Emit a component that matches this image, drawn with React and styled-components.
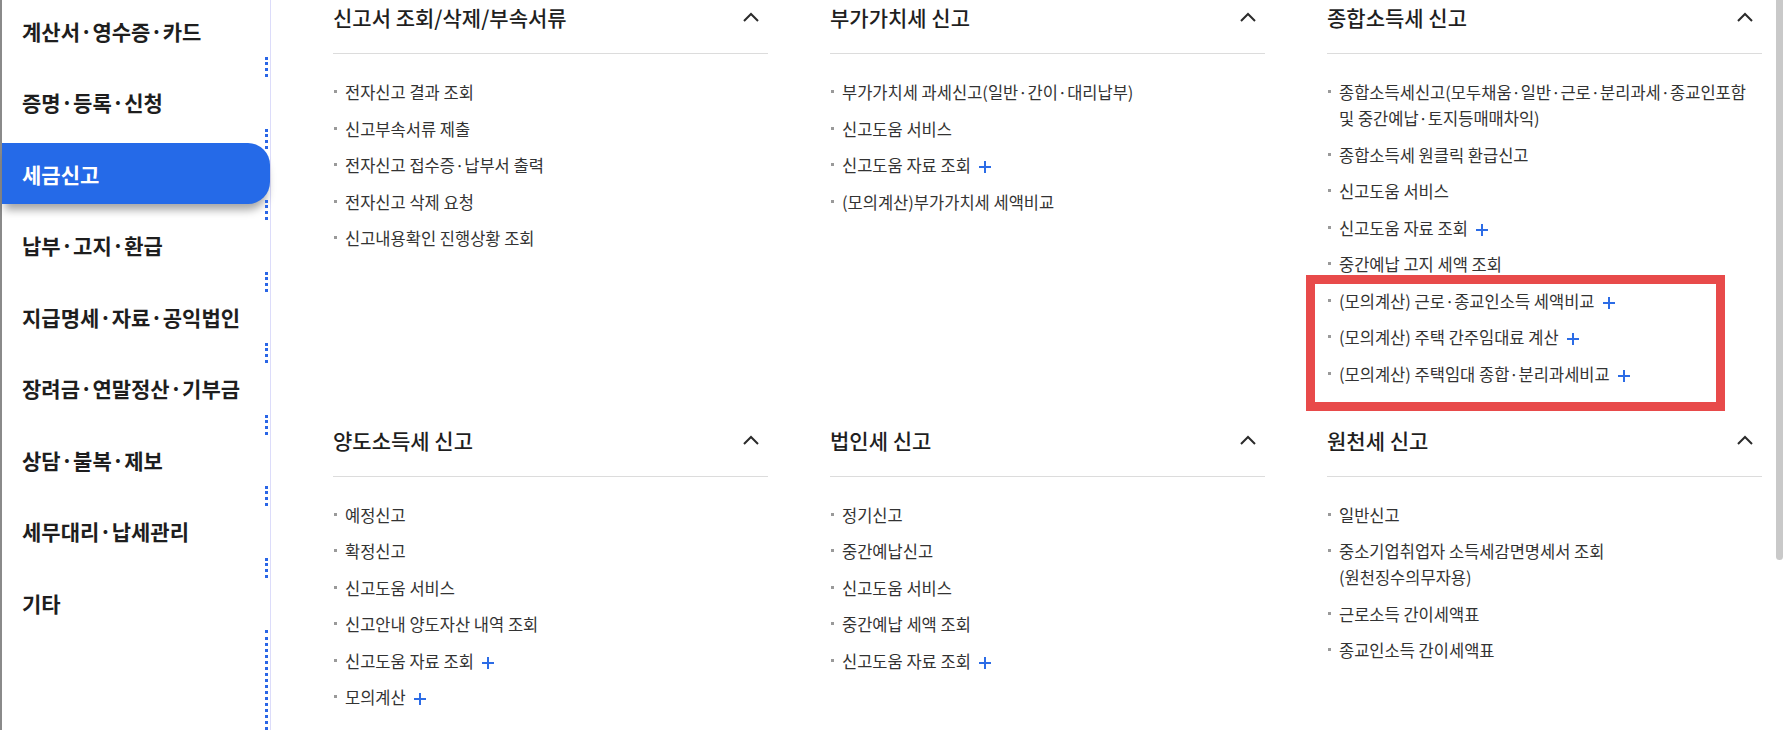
import React from 'react';
import styled, { createGlobalStyle } from 'styled-components';

const GlobalStyle = createGlobalStyle`
	html, body {
		margin: 0;
		padding: 0;
		background: #fff;
	}
	body {
		font-family: "Noto Sans CJK KR", "Noto Sans", sans-serif;
		overflow: hidden;
	}
	* {
		box-sizing: border-box;
	}
`;

const Layout = styled.div`
	position: relative;
	display: flex;
	width: 1783px;
	height: 730px;
	overflow: hidden;
`;

const Sidebar = styled.nav`
	flex-shrink: 0;
	width: 271px;
	border-left: 2px solid #8a8a8a;
	border-right: 1px solid #dcdcfa;
	display: flex;
	flex-direction: column;
	gap: 10.5px;
`;

const MenuItem = styled.a`
	position: relative;
	height: 61px;
	display: flex;
	align-items: center;
	padding-left: 20px;
	font-size: 21px;
	font-weight: 700;
	text-decoration: none;
	white-space: nowrap;
	color: ${p => (p.$active ? '#fff' : '#1e1e1e')};
	background: ${p => (p.$active ? '#256ae8' : 'transparent')};
	border-radius: 0 22px 22px 0;
	box-shadow: ${p => (p.$active ? '0 9px 8px -3px rgba(0,0,0,0.35)' : 'none')};

	&::after {
		content: '';
		position: absolute;
		right: 2px;
		bottom: -16px;
		height: 20px;
		border-right: 3px dotted #2a66e6;
		display: ${p => (p.$last ? 'none' : 'block')};
	}
`;

const SidebarTail = styled.div`
	flex: 1;
	margin-top: -14px;
	margin-right: 2px;
	border-right: 3px dotted #2a66e6;
`;

const Main = styled.main`
	flex: 1;
	padding-left: 62px;
	display: grid;
	grid-template-columns: repeat(3, 435px);
	column-gap: 62px;
	row-gap: 36px;
	align-content: start;
`;

const Section = styled.section`
	position: relative;
`;

const SectionHeader = styled.div`
	display: flex;
	justify-content: space-between;
	align-items: center;
	padding: 0 9px 19px 0;
	border-bottom: 1px solid #dcdcdc;
`;

const Title = styled.h3`
	margin: 0;
	font-size: 21px;
	font-weight: 500;
	line-height: 34px;
	color: #1f1f1f;
`;

const List = styled.ul`
	list-style: none;
	margin: 0;
	padding: 25px 0 0;
	display: flex;
	flex-direction: column;
	gap: 10.5px;
`;

const Item = styled.li`
	position: relative;
	padding-left: 12px;
	font-size: 16.5px;
	line-height: 26px;
	color: #333;
	word-break: keep-all;
	white-space: nowrap;

	&::before {
		content: '';
		position: absolute;
		left: 1px;
		top: 11px;
		width: 3px;
		height: 3px;
		background: #9a9a9a;
	}
`;

const PlusIcon = styled.svg`
	width: 12px;
	height: 12px;
	margin-left: 8px;
	vertical-align: -1px;
`;

const Highlight = styled.div`
	position: absolute;
	left: -21px;
	top: 275px;
	width: 419px;
	height: 136px;
	border: 9px solid #e84a4a;
	pointer-events: none;
`;

const ScrollThumb = styled.div`
	position: absolute;
	right: 0;
	top: 0;
	width: 7px;
	height: 560px;
	background: #c9c9c9;
	border-radius: 0 0 4px 4px;
`;

const Plus = () => (
	<PlusIcon viewBox="0 0 12 12">
		<path d="M6 0v12M0 6h12" stroke="#2c6ce6" strokeWidth="2" fill="none" />
	</PlusIcon>
);

const Chevron = () => (
	<svg width="16" height="10" viewBox="0 0 16 10">
		<polyline points="1,9 8,2 15,9" stroke="#2b2b2b" strokeWidth="2" fill="none" />
	</svg>
);

const menu = [
	'계산서·영수증·카드',
	'증명·등록·신청',
	'세금신고',
	'납부·고지·환급',
	'지급명세·자료·공익법인',
	'장려금·연말정산·기부금',
	'상담·불복·제보',
	'세무대리·납세관리',
	'기타',
];

// [text, hasPlus]
const sections = [
	{
		title: '신고서 조회/삭제/부속서류',
		items: [
			['전자신고 결과 조회'],
			['신고부속서류 제출'],
			['전자신고 접수증·납부서 출력'],
			['전자신고 삭제 요청'],
			['신고내용확인 진행상황 조회'],
		],
	},
	{
		title: '부가가치세 신고',
		items: [
			['부가가치세 과세신고(일반·간이·대리납부)'],
			['신고도움 서비스'],
			['신고도움 자료 조회', true],
			['(모의계산)부가가치세 세액비교'],
		],
	},
	{
		title: '종합소득세 신고',
		highlight: true,
		items: [
			[<>종합소득세신고(모두채움·일반·근로·분리과세·종교인포함<br />및 중간예납·토지등매매차익)</>],
			['종합소득세 원클릭 환급신고'],
			['신고도움 서비스'],
			['신고도움 자료 조회', true],
			['중간예납 고지 세액 조회'],
			['(모의계산) 근로·종교인소득 세액비교', true],
			['(모의계산) 주택 간주임대료 계산', true],
			['(모의계산) 주택임대 종합·분리과세비교', true],
		],
	},
	{
		title: '양도소득세 신고',
		items: [
			['예정신고'],
			['확정신고'],
			['신고도움 서비스'],
			['신고안내 양도자산 내역 조회'],
			['신고도움 자료 조회', true],
			['모의계산', true],
		],
	},
	{
		title: '법인세 신고',
		items: [
			['정기신고'],
			['중간예납신고'],
			['신고도움 서비스'],
			['중간예납 세액 조회'],
			['신고도움 자료 조회', true],
		],
	},
	{
		title: '원천세 신고',
		items: [
			['일반신고'],
			[<>중소기업취업자 소득세감면명세서 조회<br />(원천징수의무자용)</>],
			['근로소득 간이세액표'],
			['종교인소득 간이세액표'],
		],
	},
];

function App() {
	return (
		<>
			<GlobalStyle />
			<Layout>
				<Sidebar>
					{menu.map((m, i) => (
						<MenuItem key={m} $active={m === '세금신고'} $last={i === menu.length - 1}>
							{m}
						</MenuItem>
					))}
					<SidebarTail />
				</Sidebar>
				<Main>
					{sections.map(s => (
						<Section key={s.title}>
							<SectionHeader>
								<Title>{s.title}</Title>
								<Chevron />
							</SectionHeader>
							<List>
								{s.items.map(([text, plus], i) => (
									<Item key={i}>
										{text}
										{plus && <Plus />}
									</Item>
								))}
							</List>
							{s.highlight && <Highlight />}
						</Section>
					))}
				</Main>
				<ScrollThumb />
			</Layout>
		</>
	);
}

export default App;
